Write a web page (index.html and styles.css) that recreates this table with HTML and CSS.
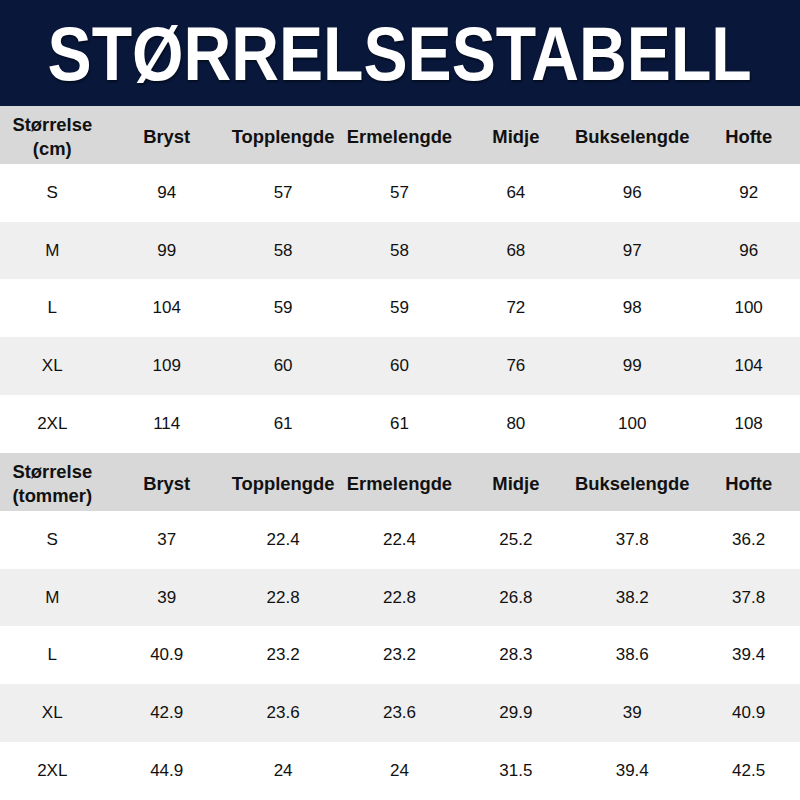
FILE: index.html
```html
<!DOCTYPE html>
<html lang="no">
<head>
<meta charset="utf-8">
<title>Størrelsestabell</title>
<link rel="stylesheet" href="styles.css">
</head>
<body>
<div class="page">
  <header class="banner"><h1 class="title">STØRRELSESTABELL</h1></header>
  <section class="table">
    <div class="row head"><div class="first">Størrelse<br>(cm)</div><div>Bryst</div><div>Topplengde</div><div>Ermelengde</div><div>Midje</div><div>Bukselengde</div><div>Hofte</div></div>
    <div class="row"><div class="first">S</div><div>94</div><div>57</div><div>57</div><div>64</div><div>96</div><div>92</div></div>
    <div class="row alt"><div class="first">M</div><div>99</div><div>58</div><div>58</div><div>68</div><div>97</div><div>96</div></div>
    <div class="row"><div class="first">L</div><div>104</div><div>59</div><div>59</div><div>72</div><div>98</div><div>100</div></div>
    <div class="row alt"><div class="first">XL</div><div>109</div><div>60</div><div>60</div><div>76</div><div>99</div><div>104</div></div>
    <div class="row"><div class="first">2XL</div><div>114</div><div>61</div><div>61</div><div>80</div><div>100</div><div>108</div></div>
  </section>
  <section class="table">
    <div class="row head"><div class="first">Størrelse<br>(tommer)</div><div>Bryst</div><div>Topplengde</div><div>Ermelengde</div><div>Midje</div><div>Bukselengde</div><div>Hofte</div></div>
    <div class="row"><div class="first">S</div><div>37</div><div>22.4</div><div>22.4</div><div>25.2</div><div>37.8</div><div>36.2</div></div>
    <div class="row alt"><div class="first">M</div><div>39</div><div>22.8</div><div>22.8</div><div>26.8</div><div>38.2</div><div>37.8</div></div>
    <div class="row"><div class="first">L</div><div>40.9</div><div>23.2</div><div>23.2</div><div>28.3</div><div>38.6</div><div>39.4</div></div>
    <div class="row alt"><div class="first">XL</div><div>42.9</div><div>23.6</div><div>23.6</div><div>29.9</div><div>39</div><div>40.9</div></div>
    <div class="row"><div class="first">2XL</div><div>44.9</div><div>24</div><div>24</div><div>31.5</div><div>39.4</div><div>42.5</div></div>
  </section>
</div>
</body>
</html>
```

FILE: styles.css
```css
html, body {
  margin: 0;
  padding: 0;
  overflow: hidden;
  background: #ffffff;
}
.page {
  width: 800px;
  height: 800px;
  display: flex;
  flex-direction: column;
  overflow: hidden;
  font-family: "Liberation Sans", Arial, sans-serif;
  color: #111111;
}
.banner {
  height: 106px;
  flex: 0 0 106px;
  background: #08173a;
  display: flex;
  align-items: center;
  justify-content: center;
}
.title {
  margin: 0;
  padding-top: 2px;
  font-size: 76px;
  font-weight: 700;
  color: #ffffff;
  line-height: 1;
  display: inline-block;
  transform: scaleX(0.87);
  text-shadow: 1px 2px 2px rgba(0, 0, 0, 0.45);
  white-space: nowrap;
}
.table {
  flex: 1;
  display: flex;
  flex-direction: column;
}
.row {
  flex: 1 1 0;
  min-height: 0;
  display: grid;
  grid-template-columns: 108.5px repeat(6, 116.4px);
  width: 807px;
  align-items: center;
  text-align: center;
  font-size: 17px;
  background: #ffffff;
}
.row .first {
  padding-right: 4px;
}
.row.alt {
  background: #efefef;
}
.row.head {
  background: #d8d8d8;
  font-weight: 700;
  font-size: 18.4px;
  line-height: 24px;
  color: #111111;
}
.row.head > div {
  padding-top: 4px;
}
```
